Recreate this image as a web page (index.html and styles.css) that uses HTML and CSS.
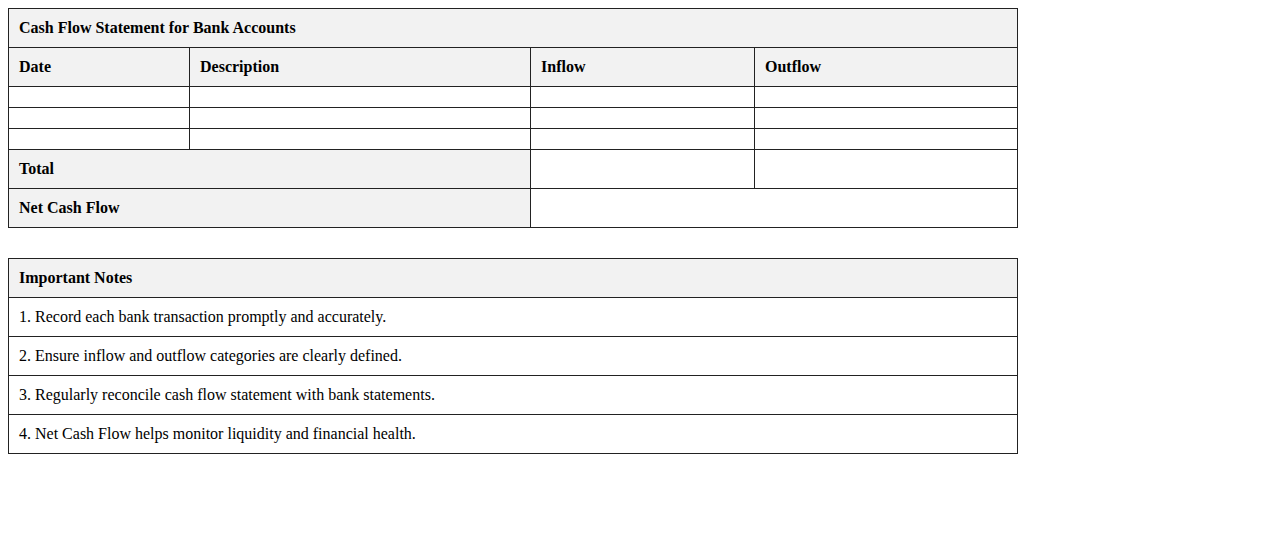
FILE: index.html
```html
<!DOCTYPE html>
<html>
<head>
<meta charset="utf-8">
<link rel="stylesheet" href="styles.css">
</head>
<body>
<table class="sheet">
  <colgroup>
    <col class="c-date">
    <col class="c-desc">
    <col class="c-in">
    <col class="c-out">
  </colgroup>
  <tr><th colspan="4">Cash Flow Statement for Bank Accounts</th></tr>
  <tr><th>Date</th><th>Description</th><th>Inflow</th><th>Outflow</th></tr>
  <tr><td></td><td></td><td></td><td></td></tr>
  <tr><td></td><td></td><td></td><td></td></tr>
  <tr><td></td><td></td><td></td><td></td></tr>
  <tr><th colspan="2">Total</th><td></td><td></td></tr>
  <tr><th colspan="2">Net Cash Flow</th><td colspan="2"></td></tr>
</table>
<table class="sheet notes">
  <tr><th>Important Notes</th></tr>
  <tr><td>1. Record each bank transaction promptly and accurately.</td></tr>
  <tr><td>2. Ensure inflow and outflow categories are clearly defined.</td></tr>
  <tr><td>3. Regularly reconcile cash flow statement with bank statements.</td></tr>
  <tr><td>4. Net Cash Flow helps monitor liquidity and financial health.</td></tr>
</table>
</body>
</html>
```
FILE: styles.css
```css
body {
  margin: 8px;
  font-family: "Liberation Serif", "Times New Roman", serif;
  font-size: 16px;
  color: #000;
  background: #fff;
}
.sheet {
  width: 1010px;
  border-collapse: collapse;
  table-layout: fixed;
  margin-bottom: 30px;
}
.sheet th, .sheet td {
  border: 1px solid #222;
  padding: 10px;
  text-align: left;
  line-height: 18px;
  height: 0;
}
.sheet th {
  background: #f2f2f2;
  font-weight: bold;
}
.c-date { width: 181px; }
.c-desc { width: 341px; }
.c-in { width: 224px; }
.c-out { width: 263px; }
```
